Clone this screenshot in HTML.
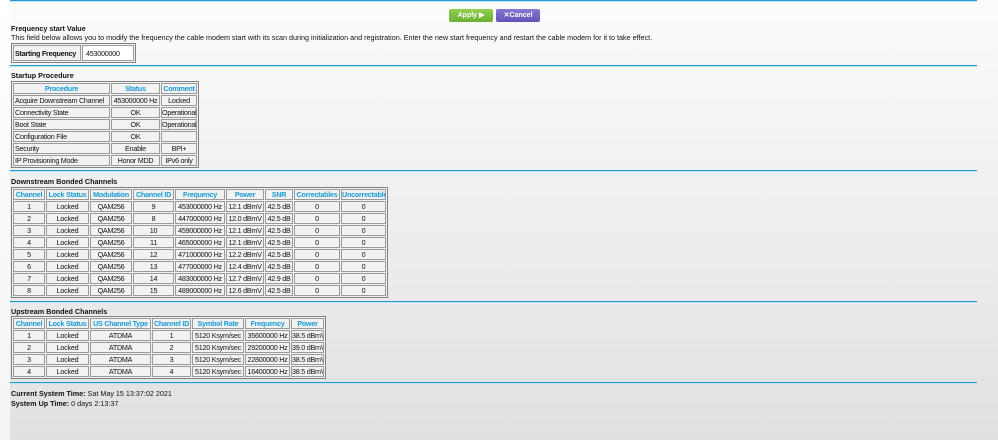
<!DOCTYPE html>
<html><head><meta charset="utf-8"><style>
*{margin:0;padding:0;box-sizing:border-box}
html,body{width:998px;height:440px;overflow:hidden}
body{background:linear-gradient(#fcfcfc,#f2f2f2 150px,#e8e8e8 330px,#e0e0e0);font-family:"Liberation Sans",sans-serif;font-size:7.2px;color:#111;position:relative}
.edge{position:absolute;left:0;top:0;width:10px;height:440px;background:linear-gradient(#fff,#f4f4f4)}
.ln{position:absolute;left:10px;width:967px;height:2px;background:#1a9ad6;border-bottom:1px solid #c8e4f2}
.a{position:absolute}
.b{font-weight:bold}
table{position:absolute;border-collapse:separate;border-spacing:1px;border:1px solid #808080;table-layout:fixed;background:#f2f2f2}
td,th{border:1px solid #9a9a9a;height:11px;padding:0;white-space:nowrap;overflow:hidden;font-size:7.2px;line-height:9px;text-align:center;font-weight:normal;letter-spacing:-0.25px}
th{color:#1a9ad6;font-weight:bold}
td.l{text-align:left;padding-left:1px}
.btn{position:absolute;top:9px;height:13px;border-radius:2px;color:#fff;font-weight:bold;font-size:7px;line-height:13px;text-align:center}
</style></head><body>
<div class="edge"></div>
<div class="ln" style="top:0"></div>
<div class="btn" style="left:449px;width:44px;background:linear-gradient(#92d050,#6cae32)">Apply ▶</div>
<div class="btn" style="left:496px;width:44px;background:linear-gradient(#8877d4,#6552b4)">✕Cancel</div>
<div class="a b" style="left:11px;top:24px">Frequency start Value</div>
<div class="a" style="left:11px;top:33px">This field below allows you to modify the frequency the cable modem start with its scan during initialization and registration. Enter the new start frequency and restart the cable modem for it to take effect.</div>
<table style="left:11px;top:43px;width:125px"><tr><td class="l b" style="width:68px;height:16px">Starting Frequency</td><td style="background:#fff;text-align:left;padding-left:3px">453000000</td></tr></table>
<div class="ln" style="top:65px"></div>
<div class="a b" style="left:11px;top:71px">Startup Procedure</div>
<table style="left:11px;top:81px;width:188px">
<tr><th style="width:97px">Procedure</th><th style="width:49px">Status</th><th>Comment</th></tr>
<tr><td class="l">Acquire Downstream Channel</td><td>453000000 Hz</td><td>Locked</td></tr>
<tr><td class="l">Connectivity State</td><td>OK</td><td>Operational</td></tr>
<tr><td class="l">Boot State</td><td>OK</td><td>Operational</td></tr>
<tr><td class="l">Configuration File</td><td>OK</td><td></td></tr>
<tr><td class="l">Security</td><td>Enable</td><td>BPI+</td></tr>
<tr><td class="l">IP Provisioning Mode</td><td>Honor MDD</td><td>IPv6 only</td></tr>
</table>
<div class="ln" style="top:170px"></div>
<div class="a b" style="left:11px;top:177px">Downstream Bonded Channels</div>
<table style="left:11px;top:187px;width:377px">
<tr><th style="width:32px">Channel</th><th style="width:43px">Lock Status</th><th style="width:42px">Modulation</th><th style="width:41px">Channel ID</th><th style="width:50px">Frequency</th><th style="width:38px">Power</th><th style="width:28px">SNR</th><th style="width:46px">Correctables</th><th>Uncorrectables</th></tr>
<tr><td>1</td><td>Locked</td><td>QAM256</td><td>9</td><td>453000000 Hz</td><td>12.1 dBmV</td><td>42.5 dB</td><td>0</td><td>0</td></tr>
<tr><td>2</td><td>Locked</td><td>QAM256</td><td>8</td><td>447000000 Hz</td><td>12.0 dBmV</td><td>42.5 dB</td><td>0</td><td>0</td></tr>
<tr><td>3</td><td>Locked</td><td>QAM256</td><td>10</td><td>459000000 Hz</td><td>12.1 dBmV</td><td>42.5 dB</td><td>0</td><td>0</td></tr>
<tr><td>4</td><td>Locked</td><td>QAM256</td><td>11</td><td>465000000 Hz</td><td>12.1 dBmV</td><td>42.5 dB</td><td>0</td><td>0</td></tr>
<tr><td>5</td><td>Locked</td><td>QAM256</td><td>12</td><td>471000000 Hz</td><td>12.2 dBmV</td><td>42.5 dB</td><td>0</td><td>0</td></tr>
<tr><td>6</td><td>Locked</td><td>QAM256</td><td>13</td><td>477000000 Hz</td><td>12.4 dBmV</td><td>42.5 dB</td><td>0</td><td>0</td></tr>
<tr><td>7</td><td>Locked</td><td>QAM256</td><td>14</td><td>483000000 Hz</td><td>12.7 dBmV</td><td>42.9 dB</td><td>0</td><td>0</td></tr>
<tr><td>8</td><td>Locked</td><td>QAM256</td><td>15</td><td>489000000 Hz</td><td>12.6 dBmV</td><td>42.5 dB</td><td>0</td><td>0</td></tr>
</table>
<div class="ln" style="top:301px"></div>
<div class="a b" style="left:11px;top:307px">Upstream Bonded Channels</div>
<table style="left:11px;top:316px;width:315px">
<tr><th style="width:32px">Channel</th><th style="width:43px">Lock Status</th><th style="width:61px">US Channel Type</th><th style="width:39px">Channel ID</th><th style="width:52px">Symbol Rate</th><th style="width:45px">Frequency</th><th>Power</th></tr>
<tr><td>1</td><td>Locked</td><td>ATDMA</td><td>1</td><td>5120 Ksym/sec</td><td>35600000 Hz</td><td>38.5 dBmV</td></tr>
<tr><td>2</td><td>Locked</td><td>ATDMA</td><td>2</td><td>5120 Ksym/sec</td><td>29200000 Hz</td><td>39.0 dBmV</td></tr>
<tr><td>3</td><td>Locked</td><td>ATDMA</td><td>3</td><td>5120 Ksym/sec</td><td>22800000 Hz</td><td>38.5 dBmV</td></tr>
<tr><td>4</td><td>Locked</td><td>ATDMA</td><td>4</td><td>5120 Ksym/sec</td><td>16400000 Hz</td><td>38.5 dBmV</td></tr>
</table>
<div class="ln" style="top:382px"></div>
<div class="a" style="left:11px;top:389px"><b>Current System Time:</b> Sat May 15 13:37:02 2021</div>
<div class="a" style="left:11px;top:399px"><b>System Up Time:</b> 0 days 2:13:37</div>
</body></html>
